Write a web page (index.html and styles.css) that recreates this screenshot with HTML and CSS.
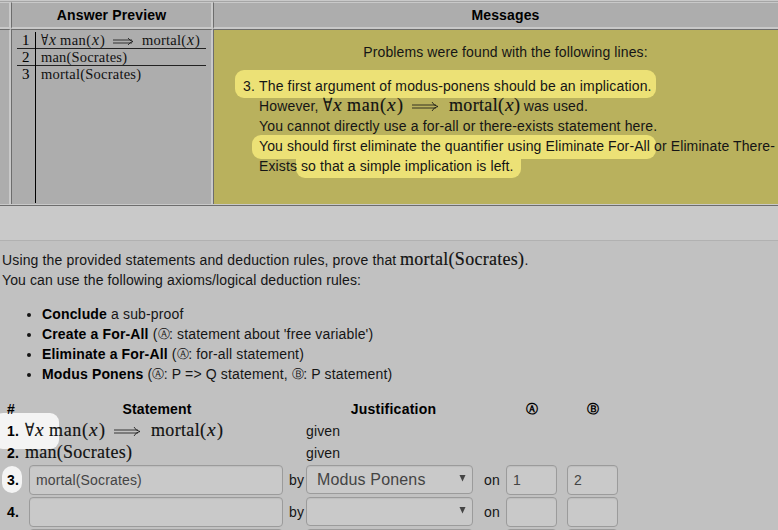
FILE: index.html
```html
<!DOCTYPE html>
<html lang="en">
<head>
<meta charset="utf-8">
<title>Deduction proof</title>
<link rel="stylesheet" href="styles.css">
</head>
<body>
<section class="results">
  <div class="cell head"></div>
  <div class="cell head">Answer Preview</div>
  <div class="cell head wide">Messages</div>
  <div class="cell"></div>
  <div class="cell preview">
    <div class="proof">
      <div class="line"><b>1</b><svg class="math" width="162" height="17"><text x="0" y="13" textLength="7" lengthAdjust="spacingAndGlyphs">∀</text><text class="v" x="8" y="13">x</text><text x="19" y="13" textLength="31">man(</text><text class="v" x="51" y="13">x</text><text x="59" y="13">)</text><path d="M72 8h19M72 11h19M87 6q2 3 5 3.5q-3 .5-5 3.5"/><text x="101" y="13" textLength="44">mortal(</text><text class="v" x="146" y="13">x</text><text x="154" y="13">)</text></svg></div>
      <div class="line"><b>2</b><svg class="math" width="162" height="17"><text x="0" y="13" textLength="86">man(Socrates)</text></svg></div>
      <div class="line"><b>3</b><svg class="math" width="162" height="17"><text x="0" y="13" textLength="100">mortal(Socrates)</text></svg></div>
      <div class="line rest"><b></b></div>
    </div>
  </div>
  <div class="cell messages">
    <i class="glow g1"></i><i class="glow g2"></i><i class="glow g3"></i>
    <p class="intro">Problems were found with the following lines:</p>
    <div class="issue"><span>3.</span>
      <div>
        <p>The first argument of modus-ponens should be an implication.</p>
        <p>However, <svg class="math big" width="197" height="20"><text x="0" y="15" textLength="9" lengthAdjust="spacingAndGlyphs">∀</text><text class="v" x="10" y="15">x</text><text x="24" y="15" textLength="39">man(</text><text class="v" x="64" y="15">x</text><text x="74" y="15">)</text><path d="M89 9h24M89 12h24M109 6q2 4 6 4.5q-4 .5-6 4.5"/><text x="126" y="15" textLength="55">mortal(</text><text class="v" x="182" y="15">x</text><text x="191" y="15">)</text></svg> was used.</p>
        <p>You cannot directly use a for-all or there-exists statement here.</p>
        <p class="tight">You should first eliminate the quantifier using Eliminate For-All or Eliminate There-</p>
        <p class="tight">Exists so that a simple implication is left.</p>
      </div>
    </div>
  </div>
</section>
<div class="band"></div>
<main>
  <p>Using the provided statements and deduction rules, prove that <svg class="math big" width="124" height="20"><text x="0" y="15" textLength="124">mortal(Socrates)</text></svg>.</p>
  <p class="tight">You can use the following axioms/logical deduction rules:</p>
  <ul>
    <li><b>Conclude</b> a sub-proof</li>
    <li><b>Create a For-All</b> (<span class="ring">Ⓐ</span>: statement about 'free variable')</li>
    <li><b>Eliminate a For-All</b> (<span class="ring">Ⓐ</span>: for-all statement)</li>
    <li><b>Modus Ponens</b> (<span class="ring">Ⓐ</span>: P =&gt; Q statement, <span class="ring">Ⓑ</span>: P statement)</li>
  </ul>
  <div class="steps">
    <i class="spot s1"></i><i class="spot s2"></i>
    <div class="row titles"><b class="hash">#</b><b>Statement</b><span></span><b class="just">Justification</b><span></span><b class="ring">Ⓐ</b><span></span><b class="ring">Ⓑ</b></div>
    <div class="row given"><b>1.</b><svg class="math big" width="200" height="20"><text x="-4" y="15" textLength="9" lengthAdjust="spacingAndGlyphs">∀</text><text class="v" x="6" y="15">x</text><text x="20" y="15" textLength="39">man(</text><text class="v" x="60" y="15">x</text><text x="70" y="15">)</text><path d="M85 9h24M85 12h24M105 6q2 4 6 4.5q-4 .5-6 4.5"/><text x="122" y="15" textLength="55">mortal(</text><text class="v" x="178" y="15">x</text><text x="188" y="15">)</text></svg><span></span><span>given</span></div>
    <div class="row given"><b>2.</b><svg class="math big" width="200" height="20"><text x="-4" y="15" textLength="107">man(Socrates)</text></svg><span></span><span>given</span></div>
    <div class="row entry"><b>3.</b><div class="field">mortal(Socrates)</div><span class="by">by</span><div class="field select">Modus Ponens<svg width="7" height="7"><path d="M.5 0h6L3.5 6.5z"/></svg></div><span class="on">on</span><div class="field">1</div><span></span><div class="field">2</div></div>
    <div class="row entry"><b>4.</b><div class="field"></div><span class="by">by</span><div class="field select"><svg width="7" height="7"><path d="M.5 0h6L3.5 6.5z"/></svg></div><span class="on">on</span><div class="field"></div><span></span><div class="field"></div></div>
    <div class="row entry last"><b></b><div class="field"></div><span></span><div class="field"></div><span></span><div class="field"></div><span></span><div class="field"></div></div>
  </div>
</main>
</body>
</html>
```
FILE: styles.css
```css
* { box-sizing: border-box; }
body { margin: 0; height: 530px; overflow: hidden; background: #c1c1c1; color: #151515; font: 14px/20px "Liberation Sans", Arial, sans-serif; letter-spacing: .15px; }
p { margin: 0; white-space: nowrap; }
b { color: #000; }
.tight { letter-spacing: .11px; }
.results { height: 206px; display: grid; grid-template-columns: 11px 202px 565px; grid-template-rows: 27px 175px; padding-top: 2px; background: #c9c9c9; border-bottom: 1px solid #6d6d6d; position: relative; }
.results::before { content: ""; position: absolute; left: 0; right: 0; top: 1px; height: 1px; background: #a5a5a5; }
.cell { background: #adadad; border-right: 2px solid #c9c9c9; border-left: 1px solid #6d6d6d; border-top: 1px solid #6d6d6d; }
.cell:nth-child(3n+1) { border-left: 0; }
.cell:nth-child(3n) { border-right: 0; }
.head { border-top: 1px solid #c9c9c9; border-bottom: 2px solid #c9c9c9; color: #000; font-weight: bold; text-align: center; line-height: 24px; }
.wide { padding-left: 19px; }
.preview { padding: 2px 0 0 5px; }
.proof { width: 189px; }
.line { display: flex; height: 17px; border-bottom: 1px solid #222; }
.line b { flex: none; width: 19px; padding-left: 5px; margin-bottom: -1px; border-right: 1px solid #000; font: 15px/17px "Liberation Serif", serif; }
.line .math { margin-left: 5px; }
.line:nth-child(3), .rest { border: 0; }
.rest { height: 119px; }
.math { display: inline-block; overflow: visible; font: 14.5px "Liberation Serif", serif; letter-spacing: 0; fill: #111; }
.math path { fill: none; stroke: #111; stroke-width: .8; }
.math .v { font-style: italic; font-size: 1.08em; }
.big { font-size: 18px; vertical-align: 0; margin: -5px 0; stroke: #111; stroke-width: .15; }
.messages { position: relative; z-index: 0; background: #b9b15d; padding-top: 12px; }
.intro { text-align: center; padding-left: 19px; letter-spacing: .11px; }
.issue { display: flex; margin: 14px 0 0 29px; }
.issue > span { width: 16px; flex: none; }
.issue p, .intro { height: 20px; }
.glow { position: absolute; z-index: -1; background: #ece176; border-radius: 9px; }
.g1 { left: 21px; top: 40px; width: 421px; height: 28px; }
.g2 { left: 38px; top: 105px; width: 404px; height: 24px; }
.g3 { left: 82px; top: 118px; width: 225px; height: 30px; }
.band { height: 35px; background: #c9c9c9; border-bottom: 1px solid #b1b1b1; }
main { height: 289px; overflow: hidden; padding: 9px 2px 0; margin-right: 0; }
main p { height: 20px; }
ul { margin: 14px 0 15px; padding-left: 40px; }
.ring { display: inline-block; position: relative; top: -1px; font-family: "DejaVu Sans", sans-serif; font-size: 12px; width: 11.5px; line-height: 16px; }
.steps { position: relative; z-index: 0; margin-left: -2px; width: 620px; }
.row { display: grid; grid-template-columns: 29px 254px 23px 167px 33px 51px 10px 51px; height: 22px; align-items: center; }
.row > b:first-child { padding-left: 7px; }
.titles { text-align: center; height: 21px; padding-bottom: 1px; }
.titles b:nth-child(2) { padding-left: 2px; }
.titles .ring { width: auto; top: 0; left: 1px; }
.titles .just { padding-left: 8px; letter-spacing: .25px; }
.row > .hash { text-align: left; padding-left: 9px; }
.entry { height: 32px; align-items: start; line-height: 30px; }
.given + .entry { margin-top: 1px; }
.field { height: 30px; background: #c9c9c9; border: 1px solid #9b9b9b; border-radius: 4px; color: #444; padding-left: 6px; line-height: 28px; box-shadow: inset 0 1px 1px #bdbdbd; }
.select { height: 29px; font-size: 16px; line-height: 27px; padding: 0 6px 0 10px; display: flex; align-items: center; white-space: pre; }
.select svg { margin-left: auto; fill: #444; margin-top: -2px; }
.last, .last .field { height: 8px; overflow: hidden; }
.by { padding-left: 6px; }
.on { padding-left: 11px; }
.spot { position: absolute; z-index: -1; background: #f4f4f4; }
.s1 { left: -6px; top: 14px; width: 65px; height: 36px; border-radius: 9px; }
.s2 { left: 2px; top: 67px; width: 20px; height: 27px; border-radius: 10px; }
```
